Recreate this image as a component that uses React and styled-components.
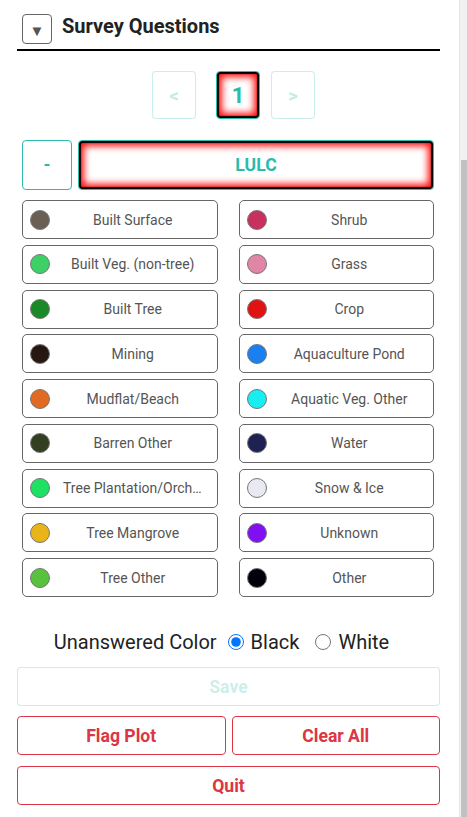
import React, { useState } from "react";
import styled, { createGlobalStyle, css } from "styled-components";

const GlobalStyle = createGlobalStyle`
  html, body {
    margin: 0;
    padding: 0;
    background: #fff;
    font-family: Roboto, "Liberation Sans", Arial, sans-serif;
  }
  * { box-sizing: border-box; }
`;

const TEAL = "#2bbbad";
const RED = "#dc3545";

const Page = styled.div`
  display: flex;
  width: 467px;
  height: 817px;
  overflow: hidden;
`;

const Content = styled.div`
  flex: 1;
  padding: 14px 19px 0 17px;
  display: flex;
  flex-direction: column;
`;

const ScrollBar = styled.div`
  width: 8px;
  display: flex;
  flex-direction: column;
  background: #f1f1f1;
  border-left: 1px solid #e6e6e6;
`;

const ScrollThumb = styled.div`
  margin-top: 160px;
  margin-left: 1px;
  flex: 1;
  background: #c1c1c1;
`;

const Header = styled.div`
  display: flex;
  align-items: flex-start;
  gap: 10px;
  padding: 0 0 5px 5px;
  border-bottom: 2px solid #000;
`;

const Toggle = styled.button`
  width: 30px;
  height: 30px;
  border: 1px solid #666;
  border-radius: 4px;
  background: #fff;
  color: #555;
  font-size: 15px;
  padding: 2px 0 0;
  display: flex;
  align-items: center;
  justify-content: center;
`;

const Title = styled.h2`
  margin: 0;
  line-height: 24px;
  font-size: 20px;
  font-weight: 700;
  color: #222;
`;

const Pager = styled.div`
  display: flex;
  margin-top: 20px;
  padding-left: 135px;
`;

const glow = css`
  box-shadow: inset 0 0 1px 2px #000, inset 0 0 7px 5px #ff1010;
`;

const PageButton = styled.button`
  width: 44px;
  height: 48px;
  margin-right: ${(p) => p.$gap || 0}px;
  border-radius: 4px;
  background: #fff;
  font-family: inherit;
  font-weight: 700;
  font-size: ${(p) => (p.$active ? 22 : 19)}px;
  border: 1px solid ${(p) => (p.$active ? TEAL : "rgba(43,187,173,0.25)")};
  color: ${(p) => (p.$active ? TEAL : "rgba(43,187,173,0.3)")};
  ${(p) => p.$active && glow}
`;

const QuestionRow = styled.div`
  display: flex;
  gap: 6px;
  margin-top: 21px;
  padding: 0 6px 0 5px;
`;

const OutlineButton = styled.button`
  height: 50px;
  flex: ${(p) => (p.$grow ? 1 : "0 0 50px")};
  border: 1px solid ${TEAL};
  border-radius: 4px;
  background: #fff;
  color: ${TEAL};
  font-family: inherit;
  font-weight: 700;
  font-size: 17.6px;
  ${(p) => p.$selected && glow}
`;

const AnswerGrid = styled.div`
  display: grid;
  grid-template-columns: 1fr 1fr;
  column-gap: 21px;
  row-gap: 5.75px;
  margin-top: 10px;
  padding: 0 6px 0 5px;
`;

const Answer = styled.button`
  height: 39px;
  display: flex;
  align-items: center;
  padding: 0 14px 0 7px;
  border: 1px solid #666;
  border-radius: 5px;
  background: #fff;
  font-family: inherit;
  min-width: 0;
`;

const Dot = styled.span`
  flex: 0 0 20px;
  height: 20px;
  border-radius: 50%;
  background: ${(p) => p.$color};
  border: 1px solid #777;
`;

const AnswerText = styled.span`
  flex: 1;
  min-width: 0;
  margin-left: 13px;
  font-size: 14px;
  color: #555;
  text-align: center;
  white-space: nowrap;
  overflow: hidden;
  text-overflow: ellipsis;
`;

const ColorChoice = styled.div`
  display: flex;
  align-items: center;
  justify-content: center;
  margin-top: 33px;
  padding-right: 14px;
  font-size: 20px;
  line-height: 24px;
  color: #222;
`;

const RadioLabel = styled.label`
  display: flex;
  align-items: center;
  gap: 7px;
  margin-left: ${(p) => p.$space}px;
`;

const Radio = styled.input`
  width: 16px;
  height: 16px;
  margin: 0;
`;

const Actions = styled.div`
  display: flex;
  flex-direction: column;
  margin-top: 13px;
`;

const ActionRow = styled.div`
  display: flex;
  gap: 6px;
  margin-top: ${(p) => p.$top}px;
`;

const ActionButton = styled.button`
  flex: 1;
  height: 39px;
  border-radius: 4px;
  background: #fff;
  font-family: inherit;
  font-weight: 700;
  font-size: 17.6px;
  border: 1px solid ${(p) => (p.$disabled ? "rgba(43,187,173,0.25)" : RED)};
  color: ${(p) => (p.$disabled ? "rgba(43,187,173,0.25)" : RED)};
`;

const answers = [
  ["Built Surface", "#6b5e55"],
  ["Shrub", "#c8305e"],
  ["Built Veg. (non-tree)", "#3dd066"],
  ["Grass", "#e085a5"],
  ["Built Tree", "#1a8a28"],
  ["Crop", "#e01212"],
  ["Mining", "#271712"],
  ["Aquaculture Pond", "#1a80f2"],
  ["Mudflat/Beach", "#e06a22"],
  ["Aquatic Veg. Other", "#16eef2"],
  ["Barren Other", "#323f20"],
  ["Water", "#1e2152"],
  ["Tree Plantation/Orchard", "#1ee062"],
  ["Snow & Ice", "#e9e9f2"],
  ["Tree Mangrove", "#e9b418"],
  ["Unknown", "#8010f2"],
  ["Tree Other", "#58c23e"],
  ["Other", "#020008"],
];

export default function App() {
  const [unanswered, setUnanswered] = useState("black");

  return (
    <Page>
      <GlobalStyle />
      <Content>
        <Header>
          <Toggle>▼</Toggle>
          <Title>Survey Questions</Title>
        </Header>

        <Pager>
          <PageButton $gap={20}>&lt;</PageButton>
          <PageButton $gap={11} $active>1</PageButton>
          <PageButton>&gt;</PageButton>
        </Pager>

        <QuestionRow>
          <OutlineButton>-</OutlineButton>
          <OutlineButton $grow $selected>LULC</OutlineButton>
        </QuestionRow>

        <AnswerGrid>
          {answers.map(([label, color]) => (
            <Answer key={label} title={label}>
              <Dot $color={color} />
              <AnswerText>{label}</AnswerText>
            </Answer>
          ))}
        </AnswerGrid>

        <ColorChoice>
          Unanswered Color
          <RadioLabel $space={11}>
            <Radio
              type="radio"
              name="unanswered"
              checked={unanswered === "black"}
              onChange={() => setUnanswered("black")}
            />
            Black
          </RadioLabel>
          <RadioLabel $space={16}>
            <Radio
              type="radio"
              name="unanswered"
              checked={unanswered === "white"}
              onChange={() => setUnanswered("white")}
            />
            White
          </RadioLabel>
        </ColorChoice>

        <Actions>
          <ActionRow $top={0}>
            <ActionButton $disabled>Save</ActionButton>
          </ActionRow>
          <ActionRow $top={10}>
            <ActionButton>Flag Plot</ActionButton>
            <ActionButton>Clear All</ActionButton>
          </ActionRow>
          <ActionRow $top={11}>
            <ActionButton>Quit</ActionButton>
          </ActionRow>
        </Actions>
      </Content>
      <ScrollBar>
        <ScrollThumb />
      </ScrollBar>
    </Page>
  );
}
